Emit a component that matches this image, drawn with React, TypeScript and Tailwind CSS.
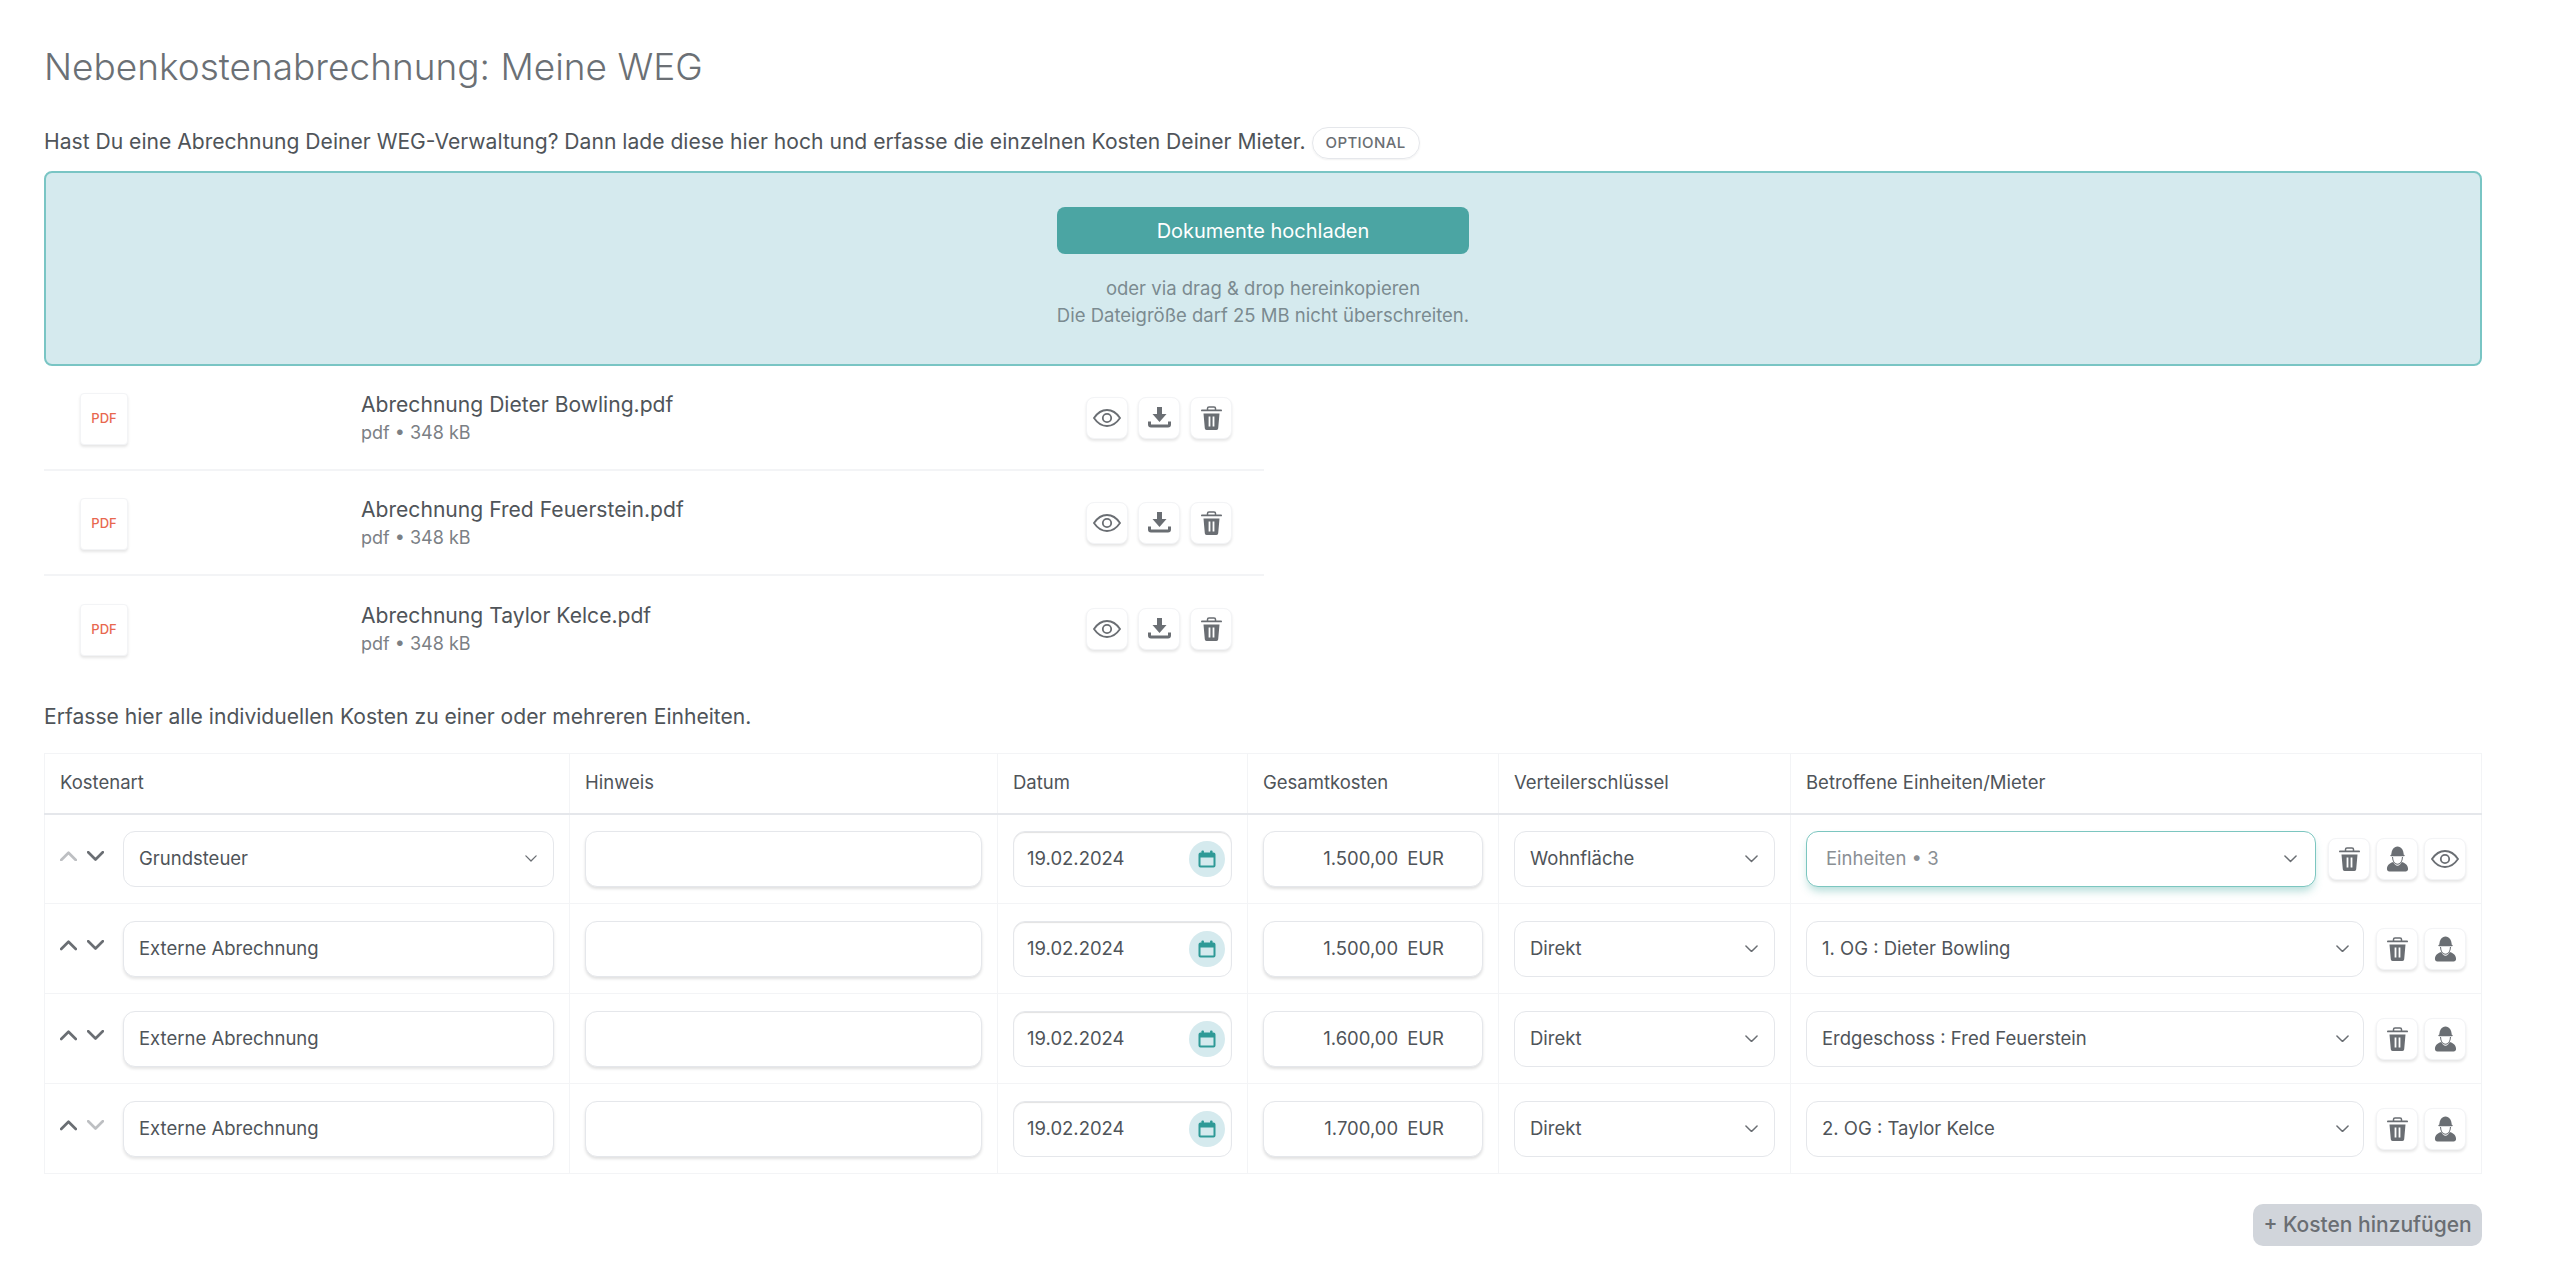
import React from 'react';

const files = ['Abrechnung Dieter Bowling.pdf', 'Abrechnung Fred Feuerstein.pdf', 'Abrechnung Taylor Kelce.pdf'];

const rows = [
  { art: 'Grundsteuer', artSelect: true, upOff: true, downOff: false, betrag: '1.500,00', key: 'Wohnfläche', einheit: 'Einheiten • 3', focus: true },
  { art: 'Externe Abrechnung', artSelect: false, upOff: false, downOff: false, betrag: '1.500,00', key: 'Direkt', einheit: '1. OG : Dieter Bowling', focus: false },
  { art: 'Externe Abrechnung', artSelect: false, upOff: false, downOff: false, betrag: '1.600,00', key: 'Direkt', einheit: 'Erdgeschoss : Fred Feuerstein', focus: false },
  { art: 'Externe Abrechnung', artSelect: false, upOff: false, downOff: true, betrag: '1.700,00', key: 'Direkt', einheit: '2. OG : Taylor Kelce', focus: false },
];

const EyeIcon = () => (
  <svg width="28" height="18" viewBox="0 0 28 18" fill="none" stroke="#6a6e73" strokeWidth="1.800">
    <path d="M1 9C4.500 3.800 9 1 14 1s9.500 2.800 13 8c-3.500 5.200-8 8-13 8S4.500 14.200 1 9Z" />
    <circle cx="14" cy="9" r="4.200" />
  </svg>
);

const DownloadIcon = () => (
  <svg width="23" height="21" viewBox="0 0 23 21" fill="#6a6e73">
    <path d="M9 0h5v7h4.500l-7 8-7-8H9z" />
    <path d="M1.500 14.500v3a1.500 1.500 0 0 0 1.500 1.500h17a1.500 1.500 0 0 0 1.500-1.500v-3" fill="none" stroke="#6a6e73" strokeWidth="3" />
  </svg>
);

const TrashIcon = () => (
  <svg width="21" height="24" viewBox="0 0 21 24" fill="#6a6e73">
    <path d="M6.500 4V2.500A1.500 1.500 0 0 1 8 1h5a1.500 1.500 0 0 1 1.500 1.500V4" fill="none" stroke="#6a6e73" strokeWidth="1.500" />
    <rect x="0" y="3.500" width="21" height="1.800" rx="0.900" />
    <path d="M2.500 7.500h16l-1.300 14.700a1.800 1.800 0 0 1-1.800 1.800H5.600a1.800 1.800 0 0 1-1.800-1.800z" />
    <rect x="7.600" y="10.500" width="1.800" height="10" fill="#fff" />
    <rect x="11.600" y="10.500" width="1.800" height="10" fill="#fff" />
  </svg>
);

const WorkerIcon = () => (
  <svg width="23" height="27" viewBox="0 0 24 28" fill="#6a6e73">
    <path d="M5.500 10.500C5.500 5.500 8 1.500 12 1.500s6.500 4 6.500 9z" />
    <rect x="4.500" y="10" width="15" height="1.600" rx="0.800" />
    <path d="M6.800 12.500c.2 4.500 2.400 7.500 5.200 7.500s5-3 5.200-7.500" fill="none" stroke="#6a6e73" strokeWidth="1.100" />
    <path d="M1 25c0-3.500 2-5.800 6.500-7.300 1.200 2.400 2.800 3.800 4.500 3.800s3.300-1.400 4.500-3.800C21 19.200 23 21.500 23 25c0 1.700-1 2.500-2.500 2.500h-17C2 27.500 1 26.700 1 25z" />
  </svg>
);

const CalendarIcon = () => (
  <svg width="18" height="18" viewBox="0 0 18 18" fill="#2f9a97">
    <rect x="3.500" y="0.500" width="2.400" height="4" rx="0.800" />
    <rect x="12.100" y="0.500" width="2.400" height="4" rx="0.800" />
    <path d="M2.500 2.500h13A2 2 0 0 1 17.500 4.500v11a2 2 0 0 1-2 2h-13a2 2 0 0 1-2-2v-11a2 2 0 0 1 2-2zm0 5v8h13v-8z" fillRule="evenodd" />
  </svg>
);

const Chevron = ({ w = 14, sw = 2, color = '#6a6e73', up = false }: { w?: number; sw?: number; color?: string; up?: boolean }) => (
  <svg width={w} height={w * 0.6} viewBox="0 0 14 8.400" fill="none" stroke={color} strokeWidth={sw} strokeLinecap="round" strokeLinejoin="round">
    <path d={up ? 'M1 7.400 7 1.400l6 6' : 'M1 1l6 6 6-6'} />
  </svg>
);

const IconButton = ({ children }: { children: React.ReactNode }) => (
  <button className="flex h-[42px] w-[42px] shrink-0 items-center justify-center rounded-lg border border-gray-100 bg-white shadow-[0_2px_3px_rgba(0,0,0,0.1)]">
    {children}
  </button>
);

const App: React.FC = () => {
  return (
    <div className="min-h-screen bg-white pl-[44px] pr-[78px] pt-[45px] text-[#4f5459] [font-family:Inter,sans-serif]">
      <h1 className="text-[37px] font-light leading-[44px] text-[#6b7075]">Nebenkostenabrechnung: Meine WEG</h1>

      <div className="mt-[37px] flex h-[32px] items-center">
        <p className="text-[21.100px]">Hast Du eine Abrechnung Deiner WEG-Verwaltung? Dann lade diese hier hoch und erfasse die einzelnen Kosten Deiner Mieter.</p>
        <span className="ml-[6px] flex h-[32px] translate-y-[1px] items-center rounded-full border border-gray-200 px-[13px] text-[15px] font-medium tracking-wide text-[#6a6e73] shadow-[0_1px_2px_rgba(0,0,0,0.06)]">OPTIONAL</span>
      </div>

      {/* Upload */}
      <div className="mt-[13px] flex h-[195px] flex-col items-center rounded-lg border-2 border-[#79c5c4] bg-[#d5eaee] pt-[34px]">
        <button className="h-[47px] w-[412px] rounded-lg bg-[#4ba5a3] text-[20px] text-white">Dokumente hochladen</button>
        <div className="mt-[21px] text-center text-[18.500px] leading-[27px] text-[#7b8a90]">
          <p>oder via drag &amp; drop hereinkopieren</p>
          <p>Die Dateigröße darf 25 MB nicht überschreiten.</p>
        </div>
      </div>

      {/* Dateien */}
      <div className="w-[1220px]">
        {files.map((name, i) => (
          <div key={name} className={`flex h-[105px] items-center pr-[32px] ${i < 2 ? 'border-b-2 border-gray-100' : ''}`}>
            <div className="w-[317px] pl-[36px] pt-[2px]">
              <div className="flex h-[52px] w-[48px] items-center justify-center rounded border border-gray-100 bg-white text-[13px] font-medium text-[#e8674f] shadow-[0_2px_3px_rgba(0,0,0,0.1)]">PDF</div>
            </div>
            <div className="flex-1 pt-[2px]">
              <div className="text-[21.100px] leading-[28px]">{name}</div>
              <div className="text-[18px] leading-[28px] text-[#7b8085]">pdf • 348 kB</div>
            </div>
            <div className="flex gap-[10px]">
              <IconButton><EyeIcon /></IconButton>
              <IconButton><DownloadIcon /></IconButton>
              <IconButton><TrashIcon /></IconButton>
            </div>
          </div>
        ))}
      </div>

      <p className="mt-[20px] text-[21.100px] leading-[32px]">Erfasse hier alle individuellen Kosten zu einer oder mehreren Einheiten.</p>

      {/* Kosten */}
      <table className="mt-[20px] w-full table-fixed border-collapse text-[18.500px]">
        <colgroup>
          <col className="w-[525px]" />
          <col className="w-[428px]" />
          <col className="w-[250px]" />
          <col className="w-[251px]" />
          <col className="w-[292px]" />
          <col />
        </colgroup>
        <thead>
          <tr className="h-[60px] border-b-2 border-gray-200">
            {['Kostenart', 'Hinweis', 'Datum', 'Gesamtkosten', 'Verteilerschlüssel', 'Betroffene Einheiten/Mieter'].map((h) => (
              <th key={h} className="border border-b-2 border-gray-100 border-b-gray-200 px-[15px] text-left font-normal">{h}</th>
            ))}
          </tr>
        </thead>
        <tbody>
          {rows.map((r, i) => (
            <tr key={i} className="h-[90px]">
              <td className="border border-gray-100 px-[15px]">
                <div className="flex items-center">
                  <div className="mr-[19px] flex -translate-y-[3px] gap-[10px]">
                    <Chevron w={17} sw={2.200} up color={r.upOff ? '#bdbfc2' : '#6a6e73'} />
                    <Chevron w={17} sw={2.200} color={r.downOff ? '#bdbfc2' : '#6a6e73'} />
                  </div>
                  <div className={`flex h-[56px] flex-1 items-center justify-between rounded-xl border border-gray-200 bg-white pl-[15px] pr-[16px] ${r.artSelect ? '' : 'shadow-[0_2px_3px_rgba(0,0,0,0.1)]'}`}>
                    <span>{r.art}</span>
                    {r.artSelect && <Chevron w={12} sw={1.500} />}
                  </div>
                </div>
              </td>
              <td className="border border-gray-100 px-[15px]">
                <div className="h-[56px] rounded-xl border border-gray-200 bg-white shadow-[0_2px_3px_rgba(0,0,0,0.12)]" />
              </td>
              <td className="border border-gray-100 px-[15px]">
                <div className="flex h-[56px] items-center justify-between rounded-xl border border-gray-200 bg-white pl-[13px] pr-[6px] shadow-[inset_0_1px_1px_rgba(0,0,0,0.12)]">
                  <span>19.02.2024</span>
                  <span className="flex h-[36px] w-[36px] items-center justify-center rounded-full bg-[#d5eaee]"><CalendarIcon /></span>
                </div>
              </td>
              <td className="border border-gray-100 px-[15px]">
                <div className="flex h-[56px] items-center justify-end gap-[9px] rounded-xl border border-gray-200 bg-white pr-[38px] shadow-[0_2px_3px_rgba(0,0,0,0.12)]">
                  <span>{r.betrag}</span>
                  <span>EUR</span>
                </div>
              </td>
              <td className="border border-gray-100 px-[15px]">
                <div className="flex h-[56px] items-center justify-between rounded-xl border border-gray-200 bg-white pl-[15px] pr-[16px]">
                  <span>{r.key}</span>
                  <Chevron w={13} sw={1.600} />
                </div>
              </td>
              <td className="border border-gray-100 pl-[15px] pr-[15px]">
                <div className="flex items-center gap-[6px]">
                  <div className={`mr-[6px] flex h-[56px] flex-1 items-center justify-between rounded-xl border bg-white ${r.focus ? 'border-[#7cc6c0] pl-[19px] pr-[18px] text-[#8a8f94] shadow-[0_6px_8px_-2px_rgba(90,180,170,0.45)]' : 'border-gray-200 pl-[15px] pr-[14px]'}`}>
                    <span>{r.einheit}</span>
                    <Chevron w={13} sw={1.600} />
                  </div>
                  <IconButton><TrashIcon /></IconButton>
                  <IconButton><WorkerIcon /></IconButton>
                  {r.focus && <IconButton><EyeIcon /></IconButton>}
                </div>
              </td>
            </tr>
          ))}
        </tbody>
      </table>

      <div className="mt-[30px] flex justify-end">
        <button className="h-[42px] w-[229px] rounded-[10px] bg-[#d1d5db] text-[21px] font-medium text-[#6a6e73]">+ Kosten hinzufügen</button>
      </div>
    </div>
  );
};

export default App;
